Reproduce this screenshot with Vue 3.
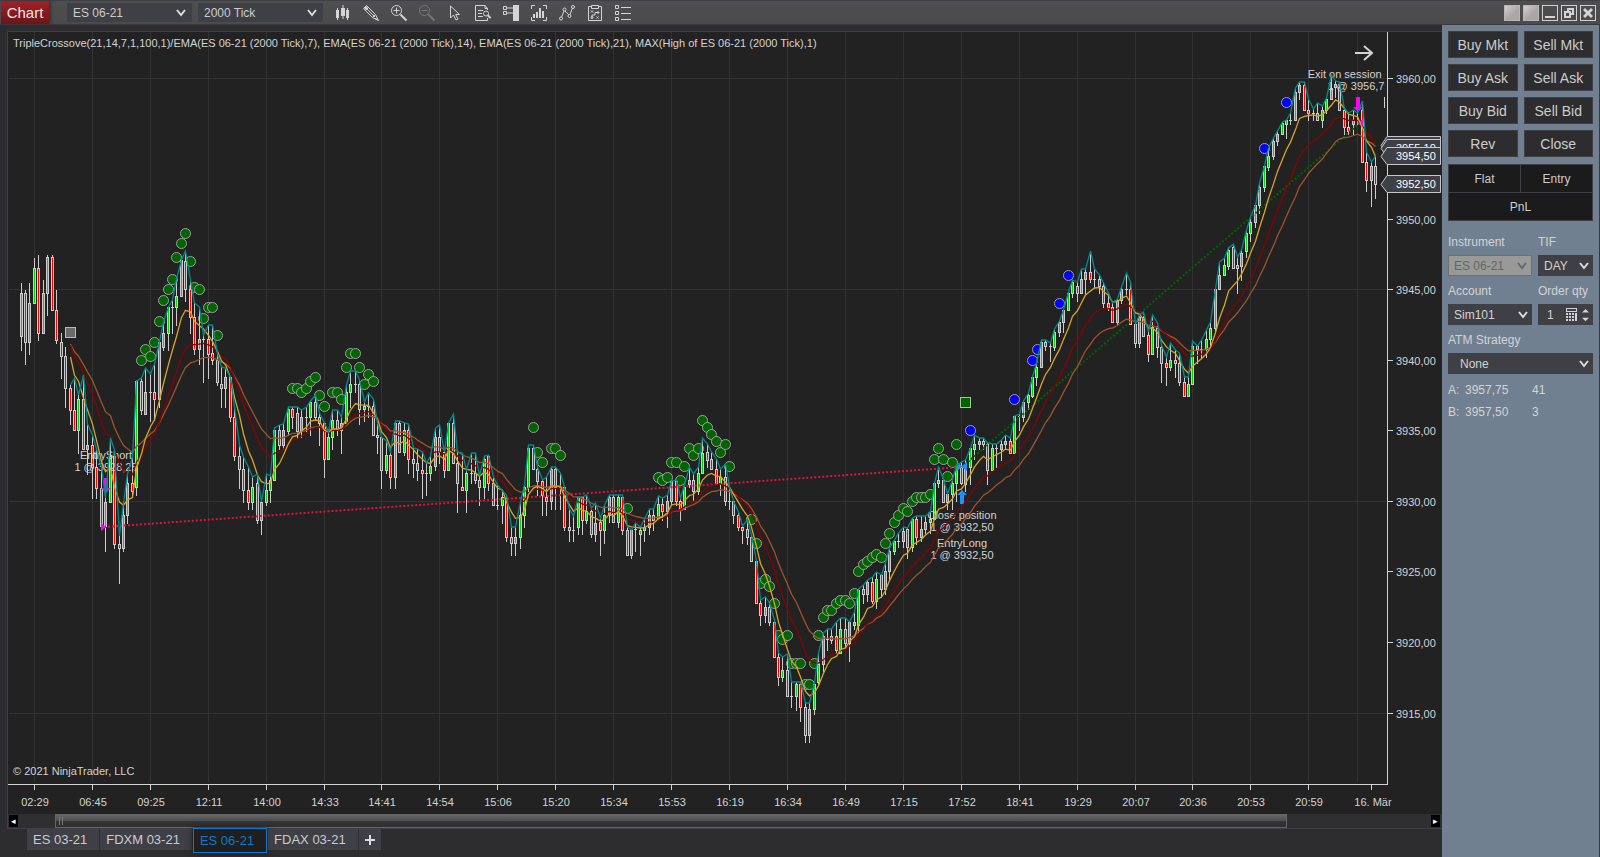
<script setup>
import { ref } from 'vue'

const instrument = ref('ES 06-21')
const interval = ref('2000 Tick')
const tif = ref('DAY')
const account = ref('Sim101')
const qty = ref('1')
const strategy = ref('None')

const orderButtons = ['Buy Mkt', 'Sell Mkt', 'Buy Ask', 'Sell Ask', 'Buy Bid', 'Sell Bid', 'Rev', 'Close']
const quotes = [
  { side: 'A:', price: '3957,75', size: '41' },
  { side: 'B:', price: '3957,50', size: '3' },
]
const tabs = ['ES 03-21', 'FDXM 03-21', 'ES 06-21', 'FDAX 03-21']
const activeTab = ref('ES 06-21')

/* Each bar: high, body top, body bottom, low; a trailing "g" marks a rising bar, "r" a falling one. */
const barData = `
283 293 336 350g,290 293 342 364r,283 303 342 354g,258 268 303 303g,255 268 333 340r,280 293 333 333g,255 257 293 315g,255 257 310 310r,290 310 340 343r,333 342 356 378r,
347 356 388 407r,385 388 410 424r,378 410 430 430r,395 399 430 453g,375 399 449 449r,424 445 449 474g,435 445 467 498r,449 467 488 498r,467 488 526 526r,498 502 526 551g,
438 456 502 502g,450 456 544 548r,536 544 548 583r,503 515 548 551g,474 483 515 523g,457 483 491 495r,381 381 487 495g,378 381 410 414r,368 392 414 414g,374 392 392 421r,
364 392 399 420r,342 342 399 407g,322 333 347 350g,307 307 333 350g,300 307 307 333g,279 296 307 325g,260 260 296 296g,251 261 289 301r,280 289 317 333r,303 317 349 354r,
307 339 349 364g,335 339 339 382r,325 339 354 378r,325 353 360 364r,354 360 382 385r,367 384 388 407r,368 377 388 407g,377 377 417 421r,407 417 456 460r,445 456 469 488r,
457 469 490 502r,467 490 502 509r,477 487 502 509g,474 483 520 523r,502 502 520 534g,474 490 502 505g,476 480 490 502g,428 430 480 480g,425 430 445 449r,424 430 445 449g,
407 409 431 435g,407 409 417 428r,407 413 431 438r,410 417 431 437g,407 417 417 431r,401 402 417 435g,395 402 417 420r,413 417 423 445r,423 423 459 477r,432 437 459 459g,
410 420 437 449g,410 420 430 435r,417 423 430 453g,385 392 423 423g,371 384 392 407g,371 384 384 392r,380 384 409 424r,402 406 409 421g,393 406 406 417r,399 406 435 435r,
423 435 437 453r,437 437 470 488r,441 455 470 473g,452 455 477 488r,421 423 477 488g,421 423 452 452r,423 430 452 455g,424 430 459 473r,448 459 463 477r,449 463 470 480r,
452 470 473 498r,463 473 473 495r,456 466 473 480g,428 437 466 470g,425 437 452 463r,452 452 470 477r,423 423 470 470g,414 423 463 463r,452 463 483 512r,453 487 490 490r,
470 473 490 512g,453 473 473 483r,453 473 480 483r,476 480 487 505r,456 459 487 498g,455 456 483 490r,477 483 505 505r,485 505 505 509r,491 497 505 523g,495 498 537 541r,
527 537 543 555r,527 537 543 555g,502 515 537 548g,485 487 515 527g,445 448 487 491g,445 448 469 469r,467 469 481 495r,480 481 495 515r,477 497 501 515r,467 469 501 509g,
467 469 487 509r,473 487 487 509r,487 487 527 530r,509 527 530 541r,516 530 530 541g,497 497 527 534g,497 497 520 534r,495 511 520 523g,508 511 534 537r,503 523 534 541g,
518 522 530 555r,505 515 530 543g,495 497 515 522g,495 497 522 522r,495 497 522 527g,495 497 530 534r,527 530 555 555r,530 530 555 558g,523 529 529 551r,527 530 534 555g,
519 527 530 541g,509 515 527 534g,509 515 520 530r,496 504 518 518g,498 504 511 520r,495 501 511 527g,481 481 501 505g,480 481 501 505r,498 501 509 520r,485 487 509 509g,
467 480 484 487g,474 480 491 501r,467 473 491 494g,438 453 473 473g,444 452 460 467r,452 459 469 469r,459 469 484 484r,469 477 484 495g,464 477 501 505r,487 501 501 509r,
501 501 515 523r,512 515 527 530r,526 527 530 543r,520 529 537 544r,535 537 561 561r,561 561 603 603r,600 603 615 625r,597 607 615 622g,603 607 622 625r,620 622 657 657r,
653 657 677 685r,657 670 677 681g,654 670 696 696r,682 696 696 707r,682 684 696 710g,682 684 707 721r,703 707 735 742r,703 709 735 742g,683 684 709 714g,653 664 682 684g,
633 636 664 671g,629 639 639 650r,629 636 640 643r,622 636 650 653r,618 629 653 653g,618 629 643 647r,622 622 643 661g,612 622 625 629g,589 590 625 632g,585 589 594 603r,
580 582 594 601g,577 582 601 603r,572 579 601 608g,575 575 589 597r,563 571 589 594g,548 551 571 579g,540 541 551 554g,533 541 541 547r,527 531 541 547g,528 529 547 558r,
518 519 547 551g,516 519 537 544r,516 529 537 541g,516 522 529 533g,512 519 522 533g,483 483 519 519g,467 480 483 487g,479 480 502 502r,494 494 502 509g,480 483 494 509g,
466 467 483 501g,462 467 483 484r,460 467 484 491g,448 448 467 484g,435 444 449 459g,438 441 444 449g,438 441 444 449r,443 444 470 484r,444 448 470 470g,444 448 448 467r,
440 444 449 460g,435 441 444 449g,438 441 453 453r,416 416 453 453g,414 416 416 430r,401 402 417 421g,393 395 402 409g,377 377 396 397g,363 367 377 385g,340 342 367 367g,
340 342 346 350r,343 346 346 361r,329 332 347 350g,321 322 332 336g,310 310 322 332g,292 293 310 310g,280 282 293 297g,282 286 293 301r,269 279 293 293g,269 272 279 293g,
251 272 279 282r,269 279 279 287r,275 279 286 293r,283 286 303 307r,293 303 307 310r,303 307 322 322r,299 300 322 324g,287 289 300 303g,273 289 289 294r,282 289 324 324r,
324 324 343 347r,315 317 343 347g,312 317 336 336r,332 335 354 361r,315 327 354 354g,323 328 347 357r,345 347 363 382r,357 363 367 385r,343 360 367 370g,350 360 363 377r,
353 363 382 385r,377 382 396 396r,377 384 396 396g,341 346 384 384g,346 346 349 363r,340 349 349 357r,330 339 349 357g,322 328 339 347g,289 289 328 332g,262 275 289 289g,
258 265 275 275g,248 250 266 269g,244 247 268 268r,257 265 268 293r,250 253 266 280g,230 233 251 257g,217 222 233 241g,205 205 222 227g,183 187 205 213g,166 166 187 191g,
148 156 167 170g,138 141 156 159g,131 134 141 145g,122 123 134 134g,120 120 124 138g,113 120 120 124r,88 92 120 120g,82 85 92 99g,82 85 110 110r,99 110 113 120r,
109 113 113 120r,103 113 120 120r,106 110 120 127g,98 99 110 113g,75 88 99 99g,81 84 87 97g,82 87 110 110r,109 110 127 134r,113 127 131 134r,110 120 124 134g,
113 120 120 124r,101 110 162 162r,152 162 180 191r,162 166 180 206g,156 166 184 198r`

const barX = (i) => Math.floor(21 + i * 4.456)
const bars = barData.trim().split(/,\s*/).map((row, i) => {
  const [high, top, bottom, low] = row.slice(0, -1).split(' ').map(Number)
  const up = row.endsWith('g')
  return { x: barX(i), high, top, bottom, low, up, close: up ? top : bottom }
})

const FIRST = 11
const toPoints = (list) => list.map(([x, y]) => `${x + 0.5},${y.toFixed(1)}`).join(' ')
const maxLine = toPoints(bars.slice(FIRST).map((b) => [b.x, b.high]))
function ema(period, seed) {
  const k = 2 / (period + 1)
  let value = seed
  return toPoints(bars.slice(FIRST).map((b, n) => {
    if (n > 0) value += k * (b.close - value)
    return [b.x, value]
  }))
}
const ema7 = ema(7, 357)
const ema14 = ema(14, 345)
const ema21 = ema(21, 344)

/* Signal dots: the first bar's index, then one height per bar. */
const greenRuns = [
  [27, [360, 349, 356, 342, 321, 300, 289, 279, 257, 243, 233, 261, 287, 289, 318, 307, 307, 335]],
  [61, [388, 388, 392, 388, 381, 377, 395, 406]],
  [70, [392, 392, 399, 367, 353, 353, 367, 384, 374, 381]],
  [115, [427, 452, 462]],
  [119, [448, 448, 455]],
  [136, [508]],
  [143, [477, 480, 477, 462, 462, 480, 466, 448, 455, 448, 420, 427, 434, 441, 452, 444, 466]],
  [164, [519, 543, 583, 579, 586, 603, 635, 639, 635, 663, 663, 663, 684, 684, 663, 635, 617, 610, 610, 603, 600, 600, 603, 593, 571, 564, 561, 557, 554, 557, 543, 533, 522, 515, 508, 511, 501, 497, 497, 497, 494, 459, 448, 459, 476, 462, 444]],
]
const greenDots = greenRuns.flatMap(([start, ys]) => ys.map((y, n) => ({ x: barX(start + n), y })))
const blueDots = [[970, 430], [1014, 399], [1032, 360], [1037, 349], [1059, 303], [1068, 275], [1264, 148], [1286, 102]]

const times = ['02:29', '06:45', '09:25', '12:11', '14:00', '14:33', '14:41', '14:54', '15:06', '15:20', '15:34', '15:53', '16:19', '16:34', '16:49', '17:15', '17:52', '18:41', '19:29', '20:07', '20:36', '20:53', '20:59']
  .map((label, k) => ({ label, x: barX(3 + 13 * k) }))
const prices = [
  ['3960,00', 78], ['3950,00', 219], ['3945,00', 289], ['3940,00', 360], ['3935,00', 430],
  ['3930,00', 501], ['3925,00', 571], ['3920,00', 642], ['3915,00', 713],
]
const gridRows = [78, 289, 501, 713]
const tags = [
  { y: 145, text: '' },
  { y: 148, text: '3955,10' },
  { y: 156, text: '3954,50' },
  { y: 184, text: '3952,50' },
]
const notes = [
  ['EntryShort', 106, 459], ['1 @ 3928,25', 106, 471],
  ['Close position', 962, 519], ['1 @ 3932,50', 962, 531],
  ['EntryLong', 962, 547], ['1 @ 3932,50', 962, 559],
  ['Exit on session close', 1359, 78], ['1 @ 3956,75', 1359, 90],
]

const tools = [
  { name: 'Bar style', kind: 'bars' }, { name: 'Drawing tools', kind: 'pencil' },
  { name: 'Zoom in', kind: 'zoomin' }, { name: 'Zoom out', kind: 'zoomout' },
  { name: 'Cursor', kind: 'cursor' }, { name: 'Data box', kind: 'doc' },
  { name: 'Chart trader', kind: 'trader' }, { name: 'Data series', kind: 'series' },
  { name: 'Indicators', kind: 'nodes' }, { name: 'Strategies', kind: 'strategy' },
  { name: 'Properties', kind: 'list' },
]
</script>

<template>
  <div class="window">
    <header class="toolbar">
      <h1 class="badge">Chart</h1>
      <span class="pick top-pick">
        <select v-model="instrument" aria-label="Instrument"><option>ES 06-21</option></select>
        <svg class="chev" viewBox="0 0 10 8"><path d="M1 1l4 5 4-5" /></svg>
      </span>
      <span class="pick top-pick">
        <select v-model="interval" aria-label="Interval"><option>2000 Tick</option></select>
        <svg class="chev" viewBox="0 0 10 8"><path d="M1 1l4 5 4-5" /></svg>
      </span>
      <nav class="tools">
        <button v-for="t in tools" :key="t.kind" type="button" class="tool" :class="{ dim: t.kind === 'zoomout' }" :aria-label="t.name">
          <svg viewBox="0 0 16 16">
            <g v-if="t.kind === 'bars'" class="solid">
              <path d="M1 5h3v8H1zM2 3h1v12H2zM6 3h4v8H6zM7.500 0h1v14h-1zM11 5h3v8h-3zM12 3h1v12h-1z" />
            </g>
            <g v-else-if="t.kind === 'pencil'" class="line">
              <path d="M.5 3.500l3-3 9 9 3 6-6-3zM2.500 5.500l3-3M9.500 12.500l3-3M4 4l8 8" />
              <path class="solid" d="M13 13l2.500 2.500-4-1.500zM1 3l2-2 2 2-2 2z" />
            </g>
            <g v-else-if="t.kind === 'zoomin'" class="line">
              <circle cx="5.500" cy="5.500" r="5" /><path d="M2.500 5.500h6M5.500 2.500v6" /><path class="thick" d="M9.500 9.500l6 6" />
            </g>
            <g v-else-if="t.kind === 'zoomout'" class="line">
              <circle cx="5.500" cy="5.500" r="5" /><path d="M2.500 5.500h6" /><path class="thick" d="M9.500 9.500l6 6" />
            </g>
            <g v-else-if="t.kind === 'cursor'" class="line">
              <path d="M3.500 1v12l3-3 2.500 5 2-1-2.300-4.500h3.800z" />
            </g>
            <g v-else-if="t.kind === 'doc'" class="line">
              <path d="M12.500 5V3.500L10 .5H.5v15h12V13M10 .5v3h2.500M3 5.500h5M3 8.500h4M3 11.500h5" />
              <circle cx="11" cy="8.500" r="2.500" /><path class="thick" d="M12.800 10.300l2.800 2.800" />
            </g>
            <g v-else-if="t.kind === 'trader'" class="line">
              <path d="M.5 1.500h3v3h-3zM.5 6.500h3v3h-3zM4 3h7M4 8h7" /><path class="solid" d="M10 0h6v16h-6z" />
            </g>
            <g v-else-if="t.kind === 'series'" class="line">
              <path d="M4 .5H.5V4M12 .5h3.500V4M.5 12v3.500H4M15.500 12v3.500H12" />
              <path class="solid" d="M2 9h2v4H2zM5 7h2v6H5zM8 3h2v10H8zM11 6h2v7h-2z" />
            </g>
            <g v-else-if="t.kind === 'nodes'" class="line">
              <path d="M2.500 12.500L5 6M6 6l4 4M11 9.500L13.500 3" />
              <circle cx="2" cy="13.500" r="1.500" /><circle cx="5.500" cy="4.500" r="1.500" /><circle cx="10.500" cy="11" r="1.500" /><circle cx="14" cy="2" r="1.500" />
            </g>
            <g v-else-if="t.kind === 'strategy'" class="line">
              <path d="M4 1.500H1.500v14h13v-14H12M4.500.5h7v3h-7zM4 5.500l2 2M6 5.500l-2 2M9.500 11.500l2 2M11.500 11.500l-2 2M5 13v-3h3V7.500h4M10.500 6l1.500 1.500L10.500 9" /><circle cx="5" cy="12.500" r="1" />
            </g>
            <g v-else class="line">
              <path d="M.5.5h3v3h-3zM.5 6.500h3v3h-3zM.5 12.500h3v3h-3zM6 2.500h10M6 8.500h10M6 14.500h10" />
            </g>
          </svg>
        </button>
      </nav>
      <div class="winbuttons">
        <button type="button" class="swatch" aria-label="Instrument link"></button>
        <button type="button" class="swatch" aria-label="Interval link"></button>
        <button type="button" aria-label="Minimize"><svg viewBox="0 0 14 14"><path d="M2 10h10v2H2z" /></svg></button>
        <button type="button" aria-label="Restore"><svg viewBox="0 0 14 14"><path fill-rule="evenodd" d="M5 2h7v7H9v3H2V5h3zM7 4v1h2v2h1V4zM4 7v3h3V7z" /></svg></button>
        <button type="button" aria-label="Close window"><svg viewBox="0 0 14 14"><path d="M4 2l3 3 3-3 2 2-3 3 3 3-2 2-3-3-3 3-2-2 3-3-3-3z" /></svg></button>
      </div>
    </header>

    <div class="body">
      <main class="workspace">
        <section class="frame">
          <svg class="chart" viewBox="8 32 1434 782" role="img" aria-label="ES 06-21 price chart">
            <defs><clipPath id="plot"><rect x="8" y="32" width="1377" height="751" /></clipPath></defs>
            <g class="grid">
              <rect v-for="t in times" :key="t.label" :x="t.x" y="32" width="1" height="750" />
              <rect x="1357" y="32" width="1" height="750" />
              <rect v-for="y in gridRows" :key="y" x="9" :y="y" width="1377" height="1" />
            </g>
            <text x="13" y="47">TripleCrossove(21,14,7,1,100,1)/EMA(ES 06-21 (2000 Tick),7), EMA(ES 06-21 (2000 Tick),14), EMA(ES 06-21 (2000 Tick),21), MAX(High of ES 06-21 (2000 Tick),1)</text>
            <text x="13" y="775">© 2021 NinjaTrader, LLC</text>
            <g clip-path="url(#plot)">
              <rect class="pale" x="1384" y="97" width="1" height="11" />
              <circle v-for="(d, i) in greenDots" :key="i" :cx="d.x + 0.5" :cy="d.y + 0.5" r="5" class="dot green" />
              <circle v-for="(d, i) in blueDots" :key="i" :cx="d[0] + 0.5" :cy="d[1] + 0.5" r="5" class="dot blue" />
              <rect class="mark gray" x="65.500" y="327.500" width="10" height="10" />
              <rect class="mark greenbox" x="960.500" y="397.500" width="10" height="10" />
              <g class="bars">
                <g v-for="b in bars" :key="b.x">
                  <rect class="edge" :x="b.x" :y="b.high" width="1" :height="b.low - b.high + 1" />
                  <rect class="edge" :x="b.x - 1" :y="b.top" width="3" :height="b.bottom - b.top + 1" />
                  <rect v-if="b.bottom > b.top + 1" :class="b.up ? 'rise' : 'fall'" :x="b.x" :y="b.top + 1" width="1" :height="b.bottom - b.top - 1" />
                </g>
              </g>
              <text v-for="(n, i) in notes" :key="i" :x="n[1]" :y="n[2]" class="mid">{{ n[0] }}</text>
              <path class="trade loss" d="M104 527L962 467" />
              <path class="trade win" d="M962 467L1361 122" />
              <path class="magenta" d="M104 478h4v10h3l-5 5-5-5h3zM101 523l5 4-5 4zM1356 97h4v10h3l-5 5-5-5h3zM1363 119v8l-6-4z" />
              <path class="azure" d="M960 504v-9h-3l5-5 5 5h-3v9zM957 462l5 4 5-4v9l-5-4-5 4z" />
              <polyline class="ind c21" :points="ema21" />
              <polyline class="ind c14" :points="ema14" />
              <polyline class="ind c7" :points="ema7" />
              <polyline class="ind cmax" :points="maxLine" />
            </g>
            <path class="jump" d="M1355 53h17M1364 46l8 7-8 7" />
            <g class="pale">
              <rect x="1387" y="32" width="1" height="753" />
              <rect x="8" y="784" width="1380" height="1" />
              <rect v-for="t in times" :key="t.label" :x="t.x" y="785" width="1" height="5" />
              <rect x="1371" y="785" width="1" height="5" />
              <rect v-for="p in prices" :key="p[0]" x="1388" :y="p[1]" width="5" height="1" />
            </g>
            <text v-for="t in times" :key="t.label" class="mid" :x="t.x + 1" y="806">{{ t.label }}</text>
            <text class="mid" x="1373" y="806">16. Mär</text>
            <text v-for="p in prices" :key="p[0]" x="1396" :y="p[1] + 5">{{ p[0] }}</text>
            <g v-for="t in tags" :key="t.y">
              <path class="tag" :d="`M1381 ${t.y + 0.5}L1387 ${t.y - 8.5}H1440.500V${t.y + 8.5}H1387Z`" />
              <text v-if="t.text" class="bright" x="1396" :y="t.y + 4">{{ t.text }}</text>
            </g>
          </svg>
          <div class="scroll">
            <button type="button" class="arrow" aria-label="Scroll left">◂</button>
            <div class="track"><div class="thumb"><i></i><i></i></div></div>
            <button type="button" class="arrow" aria-label="Scroll right">▸</button>
          </div>
        </section>
        <nav class="tabs">
          <button v-for="t in tabs" :key="t" type="button" :class="{ active: t === activeTab }" @click="activeTab = t">{{ t }}</button>
          <button type="button" class="add" aria-label="Add tab"><svg viewBox="0 0 10 10"><path d="M4 0h2v4h4v2H6v4H4V6H0V4h4z" /></svg></button>
        </nav>
      </main>

      <aside class="trader">
        <div class="orders">
          <button v-for="b in orderButtons" :key="b" type="button">{{ b }}</button>
        </div>
        <div class="position">
          <span>Flat</span><span>Entry</span><span class="wide">PnL</span>
        </div>
        <form class="fields" @submit.prevent>
          <div class="field">
            <label for="instr">Instrument</label>
            <span class="pick disabled">
              <select id="instr" v-model="instrument" disabled><option>ES 06-21</option></select>
              <svg class="chev" viewBox="0 0 10 8"><path d="M1 1l4 5 4-5" /></svg>
            </span>
          </div>
          <div class="field">
            <label for="tif">TIF</label>
            <span class="pick">
              <select id="tif" v-model="tif"><option>DAY</option></select>
              <svg class="chev" viewBox="0 0 10 8"><path d="M1 1l4 5 4-5" /></svg>
            </span>
          </div>
          <div class="field">
            <label for="acct">Account</label>
            <span class="pick">
              <select id="acct" v-model="account"><option>Sim101</option></select>
              <svg class="chev" viewBox="0 0 10 8"><path d="M1 1l4 5 4-5" /></svg>
            </span>
          </div>
          <div class="field">
            <label for="qty">Order qty</label>
            <span class="pick qty">
              <input id="qty" v-model="qty" type="text" />
              <button type="button" aria-label="Calculator">
                <svg class="calc" viewBox="0 0 11 13"><path fill-rule="evenodd" d="M0 0h11v4H0zM1 1v2h9V1zM0 5h2v2H0zM3 5h2v2H3zM6 5h2v2H6zM9 5h2v8H9zM0 8h2v2H0zM3 8h2v2H3zM6 8h2v2H6zM0 11h2v2H0zM3 11h2v2H3zM6 11h2v2H6z" /></svg>
              </button>
              <button type="button" aria-label="Change quantity">
                <svg class="spin" viewBox="0 0 8 14"><path d="M0 4l4-4 4 4zM0 10l4 4 4-4z" /></svg>
              </button>
            </span>
          </div>
          <div class="field full">
            <label for="atm">ATM Strategy</label>
            <span class="pick indent">
              <select id="atm" v-model="strategy"><option>None</option></select>
              <svg class="chev" viewBox="0 0 10 8"><path d="M1 1l4 5 4-5" /></svg>
            </span>
          </div>
        </form>
        <dl class="quotes">
          <div v-for="q in quotes" :key="q.side"><dt>{{ q.side }}</dt><dd>{{ q.price }}</dd><dd>{{ q.size }}</dd></div>
        </dl>
      </aside>
    </div>
  </div>
</template>

<style>
body { margin: 0; background: #2d2d30; }
</style>

<style scoped>
* { box-sizing: border-box; }
.window { min-height: 100vh; display: flex; flex-direction: column; background: #2d2d30; color: #ccc; font: 12px/16px "Liberation Sans", Arial, sans-serif; }
button, select, input { font: inherit; color: inherit; border: 0; padding: 0; margin: 0; background: none; border-radius: 0; }
svg { display: block; }

.toolbar { height: 25px; display: flex; align-items: center; background: linear-gradient(#4e4e4e, #4b4b4b); border-top: 1px solid #3f3f46; border-bottom: 1px solid #3a3a3e; padding: 0 4px 0 1px; }
.badge { margin: 0 18px 0 0; width: 48px; height: 23px; font-size: 15px; line-height: 23px; font-weight: 400; text-align: center; color: #f0e6e6; background: linear-gradient(#a12026, #6c1519); box-shadow: 2px 0 3px #333; }
.pick { position: relative; display: flex; height: 21px; background: #3f3f46; }
.pick select { appearance: none; width: 100%; padding: 0 6px; outline: none; }
.top-pick { height: 19px; width: 125px; margin-right: 6px; }
.chev { position: absolute; right: 4px; top: 50%; width: 10px; height: 8px; margin-top: -4px; fill: none; stroke: #ddd; stroke-width: 2; pointer-events: none; }
.top-pick .chev { right: 6px; }
.tools { display: flex; gap: 12px; margin-left: 6px; }
.tool { width: 16px; height: 16px; }
.tool svg { width: 16px; height: 16px; overflow: visible; }
.tool.dim { opacity: .3; }
.solid { fill: #d4d4d4; stroke: none; }
.line { fill: none; stroke: #d4d4d4; stroke-width: 1; }
.line .solid { fill: #d4d4d4; stroke: none; }
.thick { stroke-width: 2; }
.winbuttons { margin-left: auto; display: flex; gap: 3px; }
.winbuttons button { width: 16px; height: 16px; border: 1px solid #d0d0d0; }
.winbuttons svg { width: 14px; height: 14px; fill: #d4d4d4; }
.winbuttons .swatch { background: linear-gradient(135deg, #d0cece, #aaa6a6 60%); border-color: #b8b5b5; }

.body { flex: 1; display: flex; }
.workspace { flex: 1; min-width: 0; padding: 6px 0 0 7px; }
.frame { border: 1px solid #3f3f46; border-right: 0; background: #222; }
.chart { width: 100%; height: auto; font-size: 11px; }
.chart text { fill: #d3d3d3; }
.chart .mid { text-anchor: middle; }
.chart .bright { fill: #fff; }
.grid { fill: #333; shape-rendering: crispEdges; }
.bars { shape-rendering: crispEdges; }
.pale { fill: #d3d3d3; shape-rendering: crispEdges; }
.edge { fill: #ccc; }
.rise { fill: #1c1; }
.fall { fill: #f00; }
.dot { stroke: #a0a0a0; stroke-width: 1; }
.green { fill: #006400; }
.blue { fill: #00f; }
.mark { stroke: #bbb; }
.gray { fill: #696969; }
.greenbox { fill: #006400; stroke: #9c9; }
.trade { fill: none; stroke-width: 2; stroke-dasharray: 2 2; }
.loss { stroke: #dc143c; }
.win { stroke: #006400; }
.magenta { fill: #f0f; }
.azure { fill: #1e90ff; }
.ind { fill: none; stroke-width: 1.3; }
.c7 { stroke: #daa520; }
.c14 { stroke: #8b0000; }
.c21 { stroke: #a0522d; }
.cmax { stroke: #008b8b; }
.jump { fill: none; stroke: #d3d3d3; stroke-width: 2; }
.tag { fill: #3f3f46; stroke: #c8c8c8; }

.scroll { display: flex; height: 14px; padding: 1px 2px 1px 1px; gap: 37px; background: #2f2f31; }
.arrow { width: 9px; background: #000; color: #fff; font-size: 9px; line-height: 12px; overflow: hidden; }
.track { flex: 1; margin: -1px 0; }
.thumb { width: 92%; height: 14px; padding: 2px 3px; display: flex; gap: 2px; background: linear-gradient(#666, #4c4c4c 50%, #333 55%, #303030); border: 1px solid #666; }
.thumb i { width: 1px; background: #777; }

.tabs { display: flex; align-items: flex-start; padding-left: 20px; font-size: 13px; }
.tabs button { height: 21px; padding: 0 12px 0 6px; background: #3f3f46; margin-right: 1px; white-space: nowrap; }
.tabs .active { height: 25px; margin-top: -1px; padding: 0 12px 0 6px; color: #0d78cc; background: #1f1f1f; border: 1px solid #0d78cc; box-shadow: 0 0 6px #1a1a1a; }
.tabs .add { padding: 0 6px; }
.tabs .add svg { width: 10px; height: 10px; fill: #ddd; }

.trader { width: 158px; padding: 6px 6px 0; background: #708090; border-right: 1px solid #3a3a3e; }
.orders { display: grid; grid-template-columns: 1fr 1fr; gap: 6px; }
.orders button { height: 27px; font-size: 14px; background: #2d2d30; border: 1px solid #3f3f46; }
.position { margin-top: 7px; display: grid; grid-template-columns: 1fr 1fr; gap: 1px; background: #3f3f46; border: 1px solid #3f3f46; text-align: center; }
.position span { background: #1b1b1c; line-height: 28px; height: 27px; }
.position .wide { grid-column: 1 / 3; }
.fields { margin-top: 12px; display: grid; grid-template-columns: 84px 1fr; column-gap: 6px; }
.field { height: 49px; color: #d3d3d3; }
.field label { display: block; height: 22px; line-height: 18px; }
.full { grid-column: 1 / 3; }
.disabled { background: #999; border: 1px solid #6f6f6f; color: #666; }
.disabled select { opacity: 1; padding: 0 5px; }
.disabled .chev { stroke: #666; }
.indent select { padding-left: 12px; }
.qty { align-items: center; gap: 5px; padding-right: 4px; }
.qty input { width: 23px; padding-left: 9px; outline: none; }
.calc { width: 11px; height: 13px; fill: #d3d3d3; }
.spin { width: 7px; height: 14px; fill: #d3d3d3; }
.quotes { margin: 0; color: #d3d3d3; }
.quotes div { display: grid; grid-template-columns: 17px 67px 1fr; height: 22px; line-height: 20px; }
.quotes dt, .quotes dd { margin: 0; }
</style>
